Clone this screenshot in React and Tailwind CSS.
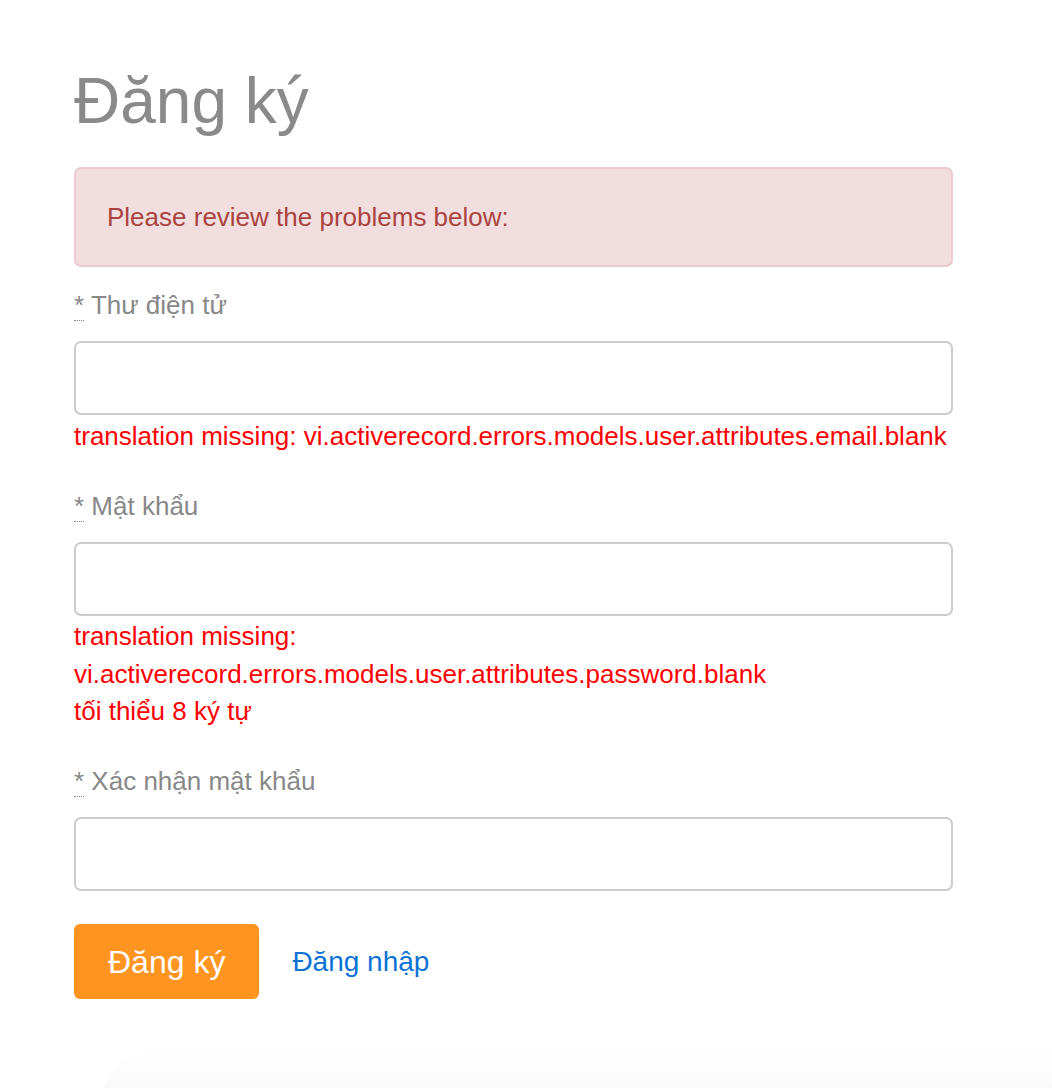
import React from "react";

function Field({ label, errors, first }) {
  return (
    <div>
      <div
        className={`${first ? "mt-[20px]" : "mt-[32.5px]"} text-[26px] leading-[37px] text-[#888888]`}
      >
        <abbr title="required" className="no-underline border-b border-dotted border-[#888888]">*</abbr>{" "}
        {label}
      </div>
      <input
        type="text"
        className="mt-[17px] block h-[74px] w-full rounded-[7px] border-2 border-[#cccccc] bg-white outline-none"
      />
      {errors && (
        <div className="pt-[2.5px] text-[26px] leading-[37.5px] text-[#ff0000]">
          {errors.map((e, i) => (
            <div key={i}>{e}</div>
          ))}
        </div>
      )}
    </div>
  );
}

export default function App() {
  return (
    <div
      className="min-h-screen bg-white overflow-hidden"
      style={{ fontFamily: '"Liberation Sans", Arial, Helvetica, sans-serif' }}
    >
      <div className="pl-[74px] pr-[99px] pt-[66px]">
        <h1 className="text-[64px] leading-[70px] font-normal text-[#8a8a8a]">Đăng ký</h1>
        <div className="mt-[31px] flex h-[100px] items-center rounded-[7px] border-2 border-[#ebccd1] bg-[#f2dede] px-[31px] text-[26px] leading-[37px] text-[#a94442]">
          Please review the problems below:
        </div>
        <Field
          first
          label="Thư điện tử"
          errors={["translation missing: vi.activerecord.errors.models.user.attributes.email.blank"]}
        />
        <Field
          label="Mật khẩu"
          errors={[
            "translation missing:",
            "vi.activerecord.errors.models.user.attributes.password.blank",
            "tối thiểu 8 ký tự",
          ]}
        />
        <Field label="Xác nhận mật khẩu" />
        <div className="mt-[33px] flex items-center">
          <button className="flex h-[75px] items-center rounded-[6px] bg-[#ff9421] px-[34px] text-[32px] text-white">
            Đăng ký
          </button>
          <a href="#" className="ml-[33px] text-[28px] text-[#0b72d6]">
            Đăng nhập
          </a>
        </div>
      </div>
      <div className="ml-[100px] mt-[48px] h-[60px] rounded-tl-[60px] bg-gradient-to-b from-[#ffffff] to-[#f8f8f8]" />
    </div>
  );
}
